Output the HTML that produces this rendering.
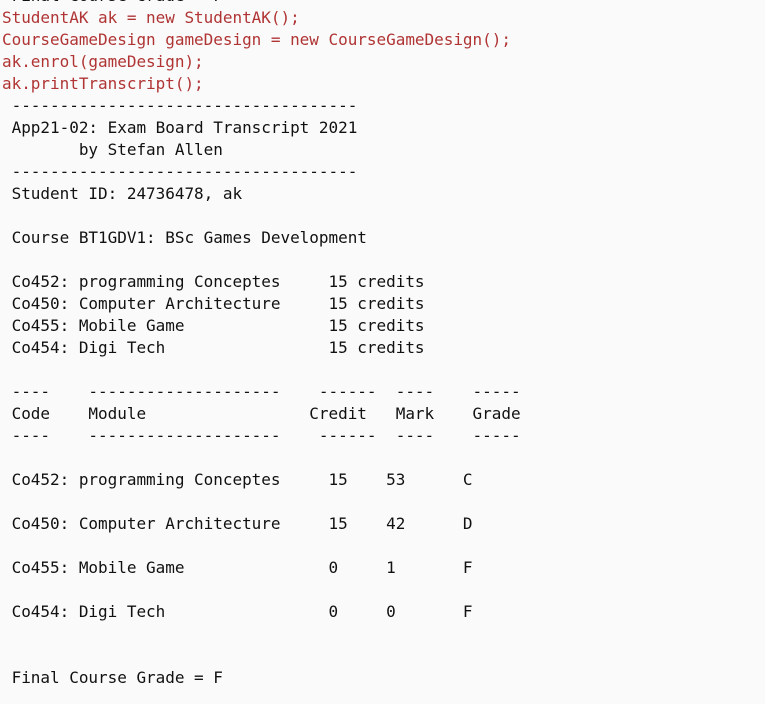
<!DOCTYPE html>
<html><head><style>
html,body{margin:0;padding:0;background:#fafafa;width:765px;height:704px;overflow:hidden}
pre{position:absolute;left:2px;top:-15px;margin:0;font:16px/22px "DejaVu Sans Mono","Liberation Mono",monospace;color:#111;letter-spacing:-0.03px}
.r{color:#b03434}
</style></head><body><pre> Final Course Grade = F
<span class="r">StudentAK ak = new StudentAK();
CourseGameDesign gameDesign = new CourseGameDesign();
ak.enrol(gameDesign);
ak.printTranscript();</span>
 ------------------------------------
 App21-02: Exam Board Transcript 2021
        by Stefan Allen
 ------------------------------------
 Student ID: 24736478, ak

 Course BT1GDV1: BSc Games Development

 Co452: programming Conceptes     15 credits
 Co450: Computer Architecture     15 credits
 Co455: Mobile Game               15 credits
 Co454: Digi Tech                 15 credits

 ----    --------------------    ------  ----    -----
 Code    Module                 Credit   Mark    Grade
 ----    --------------------    ------  ----    -----

 Co452: programming Conceptes     15    53      C

 Co450: Computer Architecture     15    42      D

 Co455: Mobile Game               0     1       F

 Co454: Digi Tech                 0     0       F


 Final Course Grade = F
</pre></body></html>
